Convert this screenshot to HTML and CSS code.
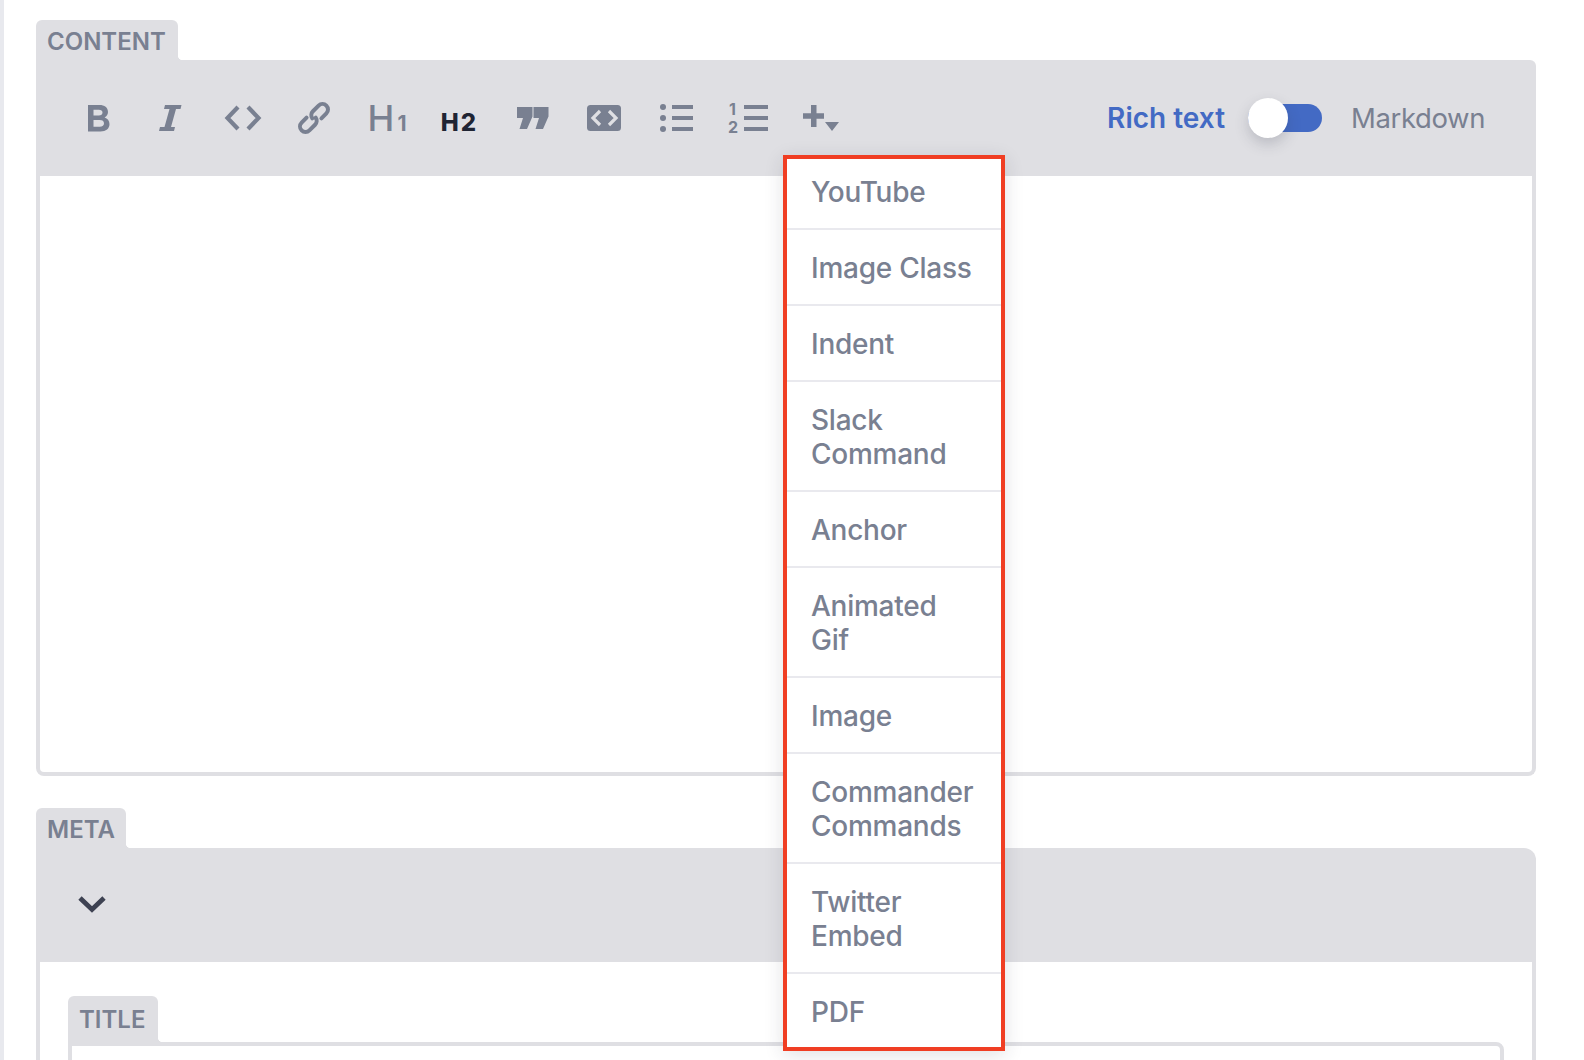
FILE: index.html
```html
<!DOCTYPE html>
<html lang="en">
<head>
<meta charset="utf-8">
<title>Editor</title>
<link rel="stylesheet" href="styles.css">
</head>
<body>
<div class="page">
  <section class="field">
    <div class="tab">CONTENT</div>
    <div class="toolbar">
      <div class="tools">
        <svg class="tool" viewBox="0 0 36 36"><path fill-rule="evenodd" d="M8 5h11.500c5 0 8.500 2.600 8.500 7 0 2.600-1.400 4.500-3.400 5.400 2.800.9 4.900 3.100 4.900 6.600 0 4.600-3.500 7.500-9 7.500H8zM13.500 9.800v5.700h5.300c2.300 0 3.700-1 3.700-2.900s-1.400-2.800-3.700-2.800zM13.500 20v6.700h6.200c2.800 0 4.300-1.200 4.300-3.400 0-2.100-1.500-3.300-4.300-3.300z"/></svg>
        <svg class="tool" viewBox="0 0 36 36"><path d="M13 5h16.500l-1 4h-4.500l-5 18h4l-1 4H7l1-4h4.500l5-18H12z"/></svg>
        <svg class="tool" viewBox="0 0 36 36"><path class="line" d="M14 7 3.500 18 14 29M24 7l10.500 11L24 29"/></svg>
        <svg class="tool" viewBox="0 0 36 36"><g transform="rotate(-45 18 18)"><path class="line link" d="M13 12.500H6a5.500 5.500 0 0 0 0 11h8a5.500 5.500 0 0 0 5.400-4.500M23 23.500h7a5.500 5.500 0 0 0 0-11h-8a5.500 5.500 0 0 0-5.400 4.500"/></g></svg>
        <div class="tool h1">H<small>1</small></div>
        <div class="tool h2">H<small>2</small></div>
        <svg class="tool" viewBox="0 0 36 36"><path d="M5 7h15.500v9.500L15 29H7.500l3.500-11H5zM21.500 7h15v9.500L31 29h-7.500L27 18h-5.500z"/></svg>
        <svg class="tool" viewBox="0 0 36 36"><rect x="3" y="5" width="34" height="26" rx="3.500"/><path class="gap" d="M16 11 9 18l7 7M25 11l7 7-7 7"/></svg>
        <svg class="tool" viewBox="0 0 36 36"><circle cx="7" cy="7" r="3"/><circle cx="7" cy="18" r="3"/><circle cx="7" cy="29" r="3"/><path d="M16 5h21v4H16zM16 16h21v4H16zM16 27h21v4H16z"/></svg>
        <svg class="tool" viewBox="0 0 36 36"><path d="M16 5h24v4H16zM16 16h24v4H16zM16 27h24v4H16z"/><text class="num" x="1" y="15">1</text><text class="num" x="0" y="33">2</text></svg>
        <svg class="tool" viewBox="0 0 36 36"><path d="M11 5h5.500v8.300H24v5.400h-7.500V27H11v-8.300H3v-5.400h8zM25 22h14l-7 9z"/></svg>
      </div>
      <div class="mode">
        <span class="mode-rich">Rich text</span>
        <span class="switch"><span class="knob"></span></span>
        <span class="mode-md">Markdown</span>
      </div>
    </div>
    <div class="body content-body"></div>
  </section>

  <section class="field meta">
    <div class="tab meta-tab">META</div>
    <div class="toolbar meta-bar">
      <svg class="chev" viewBox="0 0 28 18"><path d="M2 3 14 14.500 26 3"/></svg>
    </div>
    <div class="body meta-body">
      <div class="tab inner-tab">TITLE</div>
      <div class="inner-input"></div>
    </div>
  </section>

  <div class="strip"></div>

  <ul class="menu">
    <li>YouTube</li>
    <li>Image Class</li>
    <li>Indent</li>
    <li>Slack Command</li>
    <li>Anchor</li>
    <li>Animated Gif</li>
    <li>Image</li>
    <li>Commander Commands</li>
    <li>Twitter Embed</li>
    <li>PDF</li>
  </ul>
</div>
</body>
</html>
```
FILE: styles.css
```css
* { box-sizing: border-box; }
html, body { margin: 0; height: 100%; overflow: hidden; background: #fff; }
body { font-family: Inter, "Liberation Sans", sans-serif; color: #798091; }
.page { position: relative; height: 1060px; padding: 20px 48px 0 36px; overflow: hidden; }
.strip { position: absolute; left: 0; top: 0; width: 4px; height: 1060px; background: #e8e9ee; }

.tab {
  position: relative; width: fit-content; height: 40px; padding: 0 12px 0 11px;
  background: #dfdfe3; border-radius: 6px 6px 0 0;
  font-size: 24px; font-weight: 600; line-height: 43px; color: #798091;
}
.tab::after {
  content: ""; position: absolute; left: 100%; bottom: 0; width: 5px; height: 5px;
  background: radial-gradient(circle at 100% 0, transparent 5px, #dfdfe3 5.500px);
}
.meta-tab { padding-right: 11px; }
.toolbar {
  display: flex; align-items: center; justify-content: space-between;
  height: 116px; padding: 0 51px 0 44px;
  background: #dfdfe3; border-radius: 0 6px 0 0;
}
.tools { display: flex; align-items: center; gap: 36px; }
.tool { display: block; width: 36px; height: 36px; fill: #798091; flex: none; overflow: visible; }
.line { fill: none; stroke: #798091; stroke-width: 4.200; }
.link { stroke-width: 4; stroke-linecap: round; }
.gap { fill: none; stroke: #dfdfe3; stroke-width: 3.200; }
.num { font-size: 16px; font-weight: 700; fill: #798091; }
.h1, .h2 { display: flex; align-items: baseline; justify-content: center; line-height: 36px; white-space: nowrap; }
.h1 { font-size: 36px; font-weight: 500; color: #798091; padding-left: 2px; }
.h1 small { font-size: 21px; font-weight: 700; margin-left: 3px; }
.h2 { font-size: 24px; font-weight: 800; color: #1f2433; padding: 5px 0 0 1px; }
.h2 small { font-size: 24px; font-weight: 800; margin-left: 2px; }

.mode { display: flex; align-items: center; font-size: 28px; line-height: 34px; }
.mode-rich { color: #436ac4; font-weight: 600; }
.mode-md { color: #798091; margin-left: 29px; font-size: 27.500px; letter-spacing: -.4px; }
.switch { position: relative; display: block; width: 74px; height: 28px; margin-left: 23px; border-radius: 14px; background: #436ac4; }
.knob { position: absolute; left: 0; top: -6px; width: 40px; height: 40px; border-radius: 50%; background: #fff; box-shadow: 0 6px 14px rgba(60, 64, 80, .22); }

.body { border: 4px solid #dfdfe3; border-top: 0; background: #fff; }
.content-body { height: 600px; border-radius: 0 0 8px 8px; }
.meta { margin-top: 32px; }
.meta-bar { height: 114px; padding: 0 0 3px 42px; border-radius: 0 12px 0 0; }
.chev { display: block; width: 28px; height: 18px; fill: none; stroke: #3e4252; stroke-width: 4.800; }
.meta-body { padding: 34px 28px 0; height: 200px; }
.inner-tab { height: 46px; line-height: 47px; padding-right: 13px; }
.inner-input { height: 100px; border: 4px solid #dfdfe3; border-radius: 0 8px 0 0; }

.menu {
  position: absolute; left: 783px; top: 155px; width: 222px;
  margin: 0; padding: 0; list-style: none; background: #fff;
  border: 4px solid #f03e23; box-shadow: 0 4px 18px rgba(40, 44, 60, .14);
  font-size: 28px; font-weight: 500; line-height: 34px; letter-spacing: -.25px; color: #798091;
}
.menu li { padding: 21px 24px 19px; border-bottom: 2px solid #e9e9ee; }
.menu li:first-child { padding-top: 16px; }
.menu li:last-child { padding-bottom: 18px; border-bottom: 0; }
```
